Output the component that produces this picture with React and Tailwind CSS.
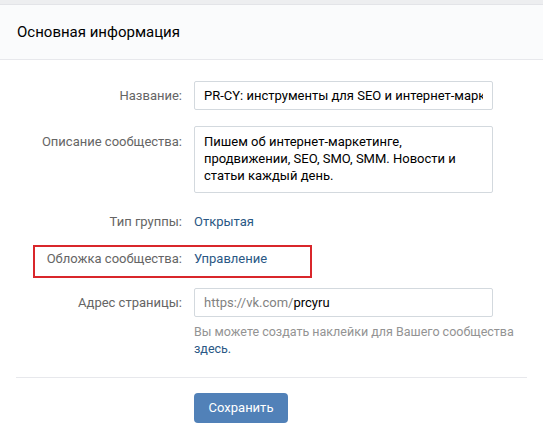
export default function App() {
  const label = 'w-[166px] shrink-0 text-right text-[#656565]'
  return (
    <div className="h-[440px] w-[543px] overflow-hidden bg-white text-[13px] text-black" style={{ fontFamily: 'Roboto, "Open Sans", sans-serif' }}>
      <div className="h-[5px] border-b border-[#e3e4e8] bg-[#edeef0]" />
      <div className="flex h-[55px] items-center border-b border-[#e7e8ec] bg-[#fafbfc] px-[17px] text-[15px] text-[#000]">
        Основная информация
      </div>

      <div className="px-4 pt-[21px]">
        <div className="flex items-center gap-3">
          <div className={label}>Название:</div>
          <div className="h-[29px] w-[299px] rounded-[2px] border border-[#d3d9de] px-[9px] leading-[27px]">
            <div className="overflow-hidden whitespace-nowrap">PR-CY: инструменты для SEO и интернет-маркетинга</div>
          </div>
        </div>

        <div className="mt-4 flex items-start gap-3">
          <div className={label + ' pt-[7px] leading-[17px]'}>Описание сообщества:</div>
          <div className="h-[67px] w-[299px] rounded-[2px] border border-[#d3d9de] px-[9px] pt-[6px] leading-[17px]">
            Пишем об интернет-маркетинге, продвижении, SEO, SMO, SMM. Новости и статьи каждый день.
          </div>
        </div>

        <div className="mt-[20px] flex gap-3 leading-[18px]">
          <div className={label}>Тип группы:</div>
          <div className="text-[#2a5885]">Открытая</div>
        </div>

        <div className="relative mt-[19px] flex gap-3 leading-[18px]">
          <div className="absolute left-[17px] top-[-5px] h-[33px] w-[279px] border-2 border-[#d9262b]" />
          <div className={label}>Обложка сообщества:</div>
          <div className="text-[#2a5885]">Управление</div>
        </div>

        <div className="mt-[20px] flex items-center gap-3">
          <div className={label}>Адрес страницы:</div>
          <div className="h-[29px] w-[299px] rounded-[2px] border border-[#d3d9de] px-[9px] leading-[27px]">
            <span className="text-[#828282]">https://vk.com/</span>prcyru
          </div>
        </div>

        <div className="mt-[6px] flex gap-3 text-[12.5px] leading-[17px]">
          <div className="w-[166px] shrink-0" />
          <div className="w-[328px] text-[#939393]">
            Вы можете создать наклейки для Вашего сообщества <span className="text-[#2a5885]">здесь.</span>
          </div>
        </div>

        <div className="mt-[20px] border-t border-[#e7e8ec]" />

        <div className="mt-[15px] flex gap-3">
          <div className="w-[166px] shrink-0" />
          <button className="h-[30px] w-[94px] rounded-[4px] bg-[#5181b8] text-[13px] text-white">Сохранить</button>
        </div>
      </div>
    </div>
  )
}
